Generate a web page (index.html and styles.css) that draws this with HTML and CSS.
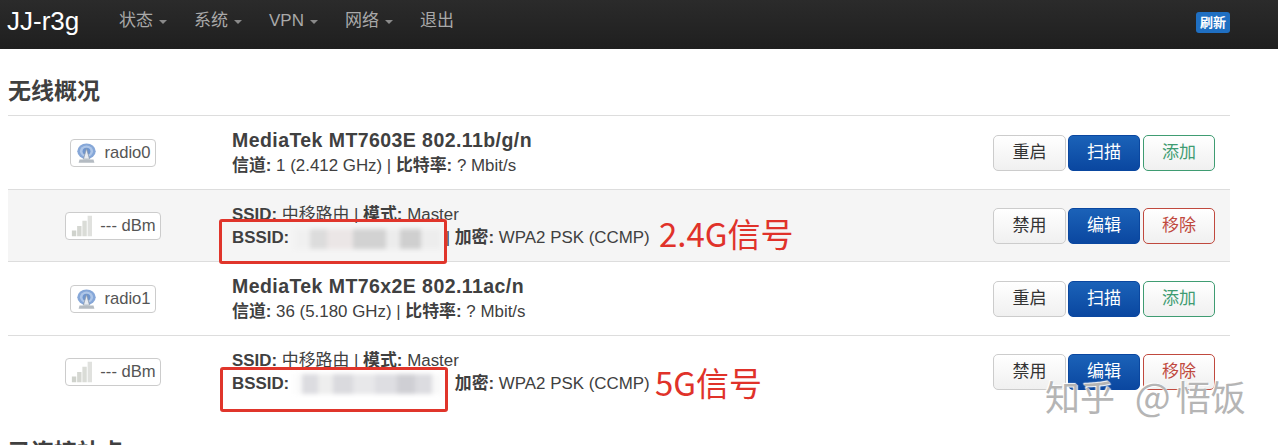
FILE: index.html
```html
<!DOCTYPE html>
<html>
  <head>
    <meta charset="utf-8" />
    <title>无线概况</title>
    <link rel="stylesheet" href="styles.css">
  </head>
  <body>
    <header class="navbar">
      <a class="brand">JJ-r3g</a>
      <nav class="menu">
        <a class="caret">状态</a>
        <a class="caret">系统</a>
        <a class="caret">VPN</a>
        <a class="caret">网络</a>
        <a>退出</a>
      </nav>
      <span class="refresh">刷新</span>
    </header>

    <main class="content">
      <h2>无线概况</h2>
      <div class="table">
        <div class="row device">
          <div class="cell-badge">
            <span class="badge">
              <svg class="ico" viewBox="0 0 24 24"><use href="#radio" /></svg>
              radio0
            </span>
          </div>
          <div class="info">
            <strong class="name">MediaTek MT7603E 802.11b/g/n</strong>
            <div><b>信道:</b> 1 (2.412 GHz) | <b>比特率:</b> ? Mbit/s</div>
          </div>
          <div class="actions">
            <a class="btn">重启</a>
            <a class="btn primary">扫描</a>
            <a class="btn add">添加</a>
          </div>
        </div>

        <div class="row net shaded">
          <div class="cell-badge">
            <span class="badge">
              <svg class="ico" viewBox="0 0 24 24"><use href="#signal" /></svg>
              --- dBm
            </span>
          </div>
          <div class="info">
            <div><b>SSID:</b> 中移路由 | <b>模式:</b> Master</div>
            <div><b>BSSID:</b> <span class="mask"></span> | <b>加密:</b> WPA2 PSK (CCMP)</div>
          </div>
          <div class="actions">
            <a class="btn">禁用</a>
            <a class="btn primary">编辑</a>
            <a class="btn del">移除</a>
          </div>
        </div>

        <div class="row device">
          <div class="cell-badge">
            <span class="badge">
              <svg class="ico" viewBox="0 0 24 24"><use href="#radio" /></svg>
              radio1
            </span>
          </div>
          <div class="info">
            <strong class="name">MediaTek MT76x2E 802.11ac/n</strong>
            <div><b>信道:</b> 36 (5.180 GHz) | <b>比特率:</b> ? Mbit/s</div>
          </div>
          <div class="actions">
            <a class="btn">重启</a>
            <a class="btn primary">扫描</a>
            <a class="btn add">添加</a>
          </div>
        </div>

        <div class="row net">
          <div class="cell-badge">
            <span class="badge">
              <svg class="ico" viewBox="0 0 24 24"><use href="#signal" /></svg>
              --- dBm
            </span>
          </div>
          <div class="info">
            <div><b>SSID:</b> 中移路由 | <b>模式:</b> Master</div>
            <div><b>BSSID:</b> <span class="mask mask-b"></span> <span class="hide">|</span> <b>加密:</b> WPA2 PSK (CCMP)</div>
          </div>
          <div class="actions">
            <a class="btn">禁用</a>
            <a class="btn primary">编辑</a>
            <a class="btn del">移除</a>
          </div>
        </div>
      </div>
      <h2 class="next">已连接站点</h2>
    </main>

    <!-- annotations drawn on top of the screenshot -->
    <div class="mark mark1"></div>
    <div class="mark mark2"></div>
    <div class="note note1">2.4G信号</div>
    <div class="note note2">5G信号</div>
    <div class="watermark">知乎 <span class="at">@</span>悟饭</div>

    <svg class="defs" width="0" height="0">
      <symbol id="radio" viewBox="0 0 24 24">
        <ellipse cx="12" cy="10" rx="10.5" ry="9" fill="#86a7d8" />
        <ellipse cx="12" cy="10" rx="7.5" ry="6.5" fill="#aec6e8" />
        <ellipse cx="12" cy="10" rx="4.5" ry="4" fill="#6f95cd" />
        <path d="M12 7l-3.5 12h7z" fill="#e8ecf2" stroke="#8d99a8" stroke-width=".8" />
        <path d="M4 19.5h16l1 3.5H3z" fill="#b4bbc2" />
      </symbol>
      <symbol id="signal" viewBox="0 0 24 24">
        <path d="M1 17h5v7H1z" fill="#cfd2cc" />
        <path d="M7 12h5v12H7z" fill="#d5d7d2" />
        <path d="M13 6h5v18h-5z" fill="#dadcd7" />
        <path d="M19 0h5v24h-5z" fill="#e0e1de" />
      </symbol>
    </svg>
  </body>
</html>
```

FILE: styles.css
```css
html { font-family: "Liberation Sans", "Noto Sans CJK SC", sans-serif; }

body {
  margin: 0;
  height: 445px;
  overflow: hidden;
  position: relative;
  color: #404040;
  font-size: 16.9px;
  line-height: 22px;
  background: #fff;
}

.navbar {
  display: flex;
  align-items: center;
  height: 49px;
  padding: 0 48px 7px 7px;
  box-sizing: border-box;
  background: linear-gradient(#2b2b2b, #1f1f1f);
}
.brand {
  color: #fff;
  font-size: 26px;
  width: 112px;
}
.menu {
  display: flex;
  gap: 27px;
  font-size: 17px;
  color: #a9a9a9;
}
.caret::after {
  content: "";
  display: inline-block;
  margin-left: 6px;
  vertical-align: middle;
  border-top: 4px solid #8a8a8a;
  border-left: 4px solid transparent;
  border-right: 4px solid transparent;
}
.refresh {
  margin-left: auto;
  margin-top: 2px;
  background: #1f6fc2;
  color: #fff;
  font-size: 13px;
  font-weight: bold;
  line-height: 21px;
  padding: 0 4px;
  border-radius: 3px;
}

.content {
  padding: 0 48px 0 8px;
}

h2 {
  margin: 0;
  padding-top: 28px;
  height: 66px;
  box-sizing: border-box;
  font-size: 23px;
  line-height: 28px;
  color: #404040;
}
h2.next {
  padding-top: 30px;
}

.row {
  display: grid;
  grid-template-columns: 210px 1fr auto;
  align-items: center;
  border-top: 1px solid #ddd;
  padding-right: 15px;
}
.device { height: 73px; }
.net { height: 71px; }
.row:nth-child(3) { height: 73px; }
.row:nth-child(4) { height: 72px; }
.shaded { background: #f5f5f5; }
.shaded .info { padding-top: 2px; }

.cell-badge {
  padding-top: 3px;
  text-align: center;
}
.badge {
  display: inline-flex;
  align-items: center;
  gap: 7px;
  height: 28px;
  padding: 0 4px 0 5px;
  box-sizing: border-box;
  background: #fff;
  border: 1px solid #ccc;
  border-radius: 4px;
  color: #555;
  font-size: 16.6px;
}
.net .badge {
  gap: 8px;
}
.ico {
  width: 21px;
  height: 22px;
}

.info {
  padding-left: 14px;
}
.name {
  display: block;
  font-size: 19.5px;
  line-height: 26px;
  letter-spacing: 0.43px;
  margin-top: -2px;
  margin-bottom: 2px;
}
.net .info > div:first-child {
  margin-bottom: 1px;
}

.mask {
  display: inline-block;
  width: 146px;
  height: 20px;
  vertical-align: middle;
  margin-left: 1px;
  filter: blur(2px);
  background: linear-gradient(90deg,
    #f0f0f0 0 10%, #dcdcdc 10% 22%, #ebe6e6 22% 40%, #d2d2d2 40% 62%,
    #ececec 62% 72%, #cfcfcf 72% 86%, #ededed 86%);
}
.mask-b {
  background: linear-gradient(90deg,
    #fafafa 0 5%, #dcdce0 5% 16%, #eeeeee 16% 26%, #dadade 26% 40%,
    #e8e8ea 40% 55%, #dedee2 55% 70%, #cfcfd4 70% 82%, #dcdce0 82% 94%, #f8f8f8 94%);
}
.hide {
  color: transparent;
}

.actions {
  display: flex;
  gap: 2px;
}
.btn {
  width: 72px;
  height: 36px;
  box-sizing: border-box;
  text-align: center;
  line-height: 33px;
  font-size: 17px;
  border: 1px solid #ccc;
  border-radius: 5px;
  background: linear-gradient(#fff, #f0f0f0);
  color: #333;
}
.btn:first-child {
  width: 73px;
}
.btn.primary {
  margin-right: 1px;
  background: linear-gradient(#1b62b8, #0a47a0);
  border-color: #0a47a0;
  color: #fff;
}
.btn.add {
  border-color: #3f9c72;
  color: #3f9c72;
}
.btn.del {
  border-color: #c0493e;
  color: #c0493e;
}

.mark {
  position: absolute;
  box-sizing: border-box;
  width: 228px;
  height: 45px;
  border: 3px solid #e0352b;
  border-radius: 3px;
}
.mark1 { left: 219px; top: 219px; }
.mark2 { left: 220px; top: 367px; }

.note {
  position: absolute;
  font-family: "Noto Sans CJK SC", sans-serif;
  font-size: 33px;
  line-height: 40px;
  color: #e0322a;
}
.note1 { left: 659px; top: 213px; }
.note2 { left: 655px; top: 362px; }

.watermark {
  position: absolute;
  left: 1045px;
  top: 371px;
  font-family: "Noto Sans CJK SC", sans-serif;
  font-size: 35px;
  line-height: 48px;
  color: #b5b5b5;
  text-shadow: 1px 1px 1px #fff, -1px -1px 1px #fff;
  white-space: nowrap;
  word-spacing: 12px;
}
.at {
  margin-right: 5px;
  font-size: 38px;
}

.defs {
  position: absolute;
}
```
